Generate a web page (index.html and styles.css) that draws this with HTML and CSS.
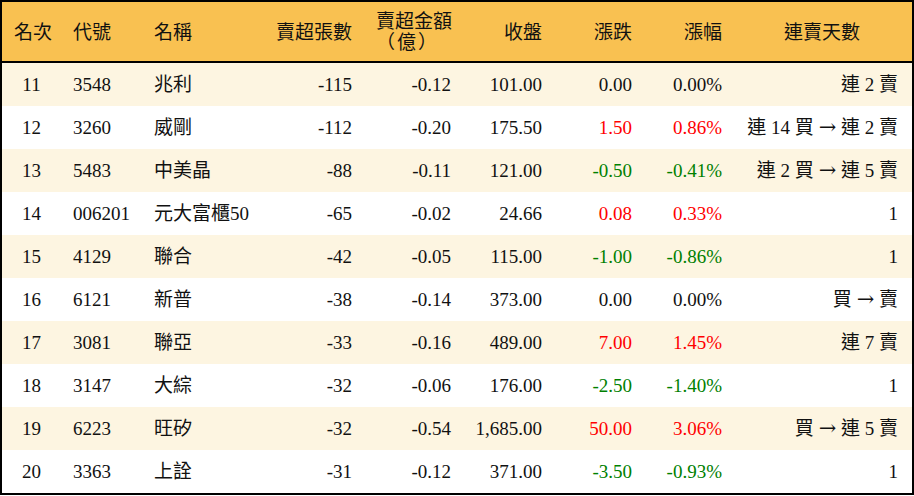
FILE: index.html
```html
<!DOCTYPE html>
<html lang="zh-Hant">
<head>
<meta charset="utf-8">
<title>賣超排行</title>
<link rel="stylesheet" href="styles.css">
</head>
<body>
<div class="board">
  <div class="row head">
    <div class="c center">名次</div>
    <div class="c">代號</div>
    <div class="c">名稱</div>
    <div class="c right">賣超張數</div>
    <div class="c right two">賣超金額<br><span class="unit">（億）</span></div>
    <div class="c right">收盤</div>
    <div class="c right">漲跌</div>
    <div class="c right">漲幅</div>
    <div class="c center">連賣天數</div>
  </div>

  <div class="row alt">
    <div class="c center">11</div><div class="c">3548</div><div class="c">兆利</div>
    <div class="c right">-115</div><div class="c right">-0.12</div><div class="c right">101.00</div>
    <div class="c right">0.00</div><div class="c right">0.00%</div><div class="c right">連 2 賣</div>
  </div>
  <div class="row">
    <div class="c center">12</div><div class="c">3260</div><div class="c">威剛</div>
    <div class="c right">-112</div><div class="c right">-0.20</div><div class="c right">175.50</div>
    <div class="c right up">1.50</div><div class="c right up">0.86%</div><div class="c right">連 14 買 <span class="arr">→</span> 連 2 賣</div>
  </div>
  <div class="row alt">
    <div class="c center">13</div><div class="c">5483</div><div class="c">中美晶</div>
    <div class="c right">-88</div><div class="c right">-0.11</div><div class="c right">121.00</div>
    <div class="c right down">-0.50</div><div class="c right down">-0.41%</div><div class="c right">連 2 買 <span class="arr">→</span> 連 5 賣</div>
  </div>
  <div class="row">
    <div class="c center">14</div><div class="c">006201</div><div class="c">元大富櫃50</div>
    <div class="c right">-65</div><div class="c right">-0.02</div><div class="c right">24.66</div>
    <div class="c right up">0.08</div><div class="c right up">0.33%</div><div class="c right">1</div>
  </div>
  <div class="row alt">
    <div class="c center">15</div><div class="c">4129</div><div class="c">聯合</div>
    <div class="c right">-42</div><div class="c right">-0.05</div><div class="c right">115.00</div>
    <div class="c right down">-1.00</div><div class="c right down">-0.86%</div><div class="c right">1</div>
  </div>
  <div class="row">
    <div class="c center">16</div><div class="c">6121</div><div class="c">新普</div>
    <div class="c right">-38</div><div class="c right">-0.14</div><div class="c right">373.00</div>
    <div class="c right">0.00</div><div class="c right">0.00%</div><div class="c right">買 <span class="arr">→</span> 賣</div>
  </div>
  <div class="row alt">
    <div class="c center">17</div><div class="c">3081</div><div class="c">聯亞</div>
    <div class="c right">-33</div><div class="c right">-0.16</div><div class="c right">489.00</div>
    <div class="c right up">7.00</div><div class="c right up">1.45%</div><div class="c right">連 7 賣</div>
  </div>
  <div class="row">
    <div class="c center">18</div><div class="c">3147</div><div class="c">大綜</div>
    <div class="c right">-32</div><div class="c right">-0.06</div><div class="c right">176.00</div>
    <div class="c right down">-2.50</div><div class="c right down">-1.40%</div><div class="c right">1</div>
  </div>
  <div class="row alt">
    <div class="c center">19</div><div class="c">6223</div><div class="c">旺矽</div>
    <div class="c right">-32</div><div class="c right">-0.54</div><div class="c right">1,685.00</div>
    <div class="c right up">50.00</div><div class="c right up">3.06%</div><div class="c right">買 <span class="arr">→</span> 連 5 賣</div>
  </div>
  <div class="row">
    <div class="c center">20</div><div class="c">3363</div><div class="c">上詮</div>
    <div class="c right">-31</div><div class="c right">-0.12</div><div class="c right">371.00</div>
    <div class="c right down">-3.50</div><div class="c right down">-0.93%</div><div class="c right">1</div>
  </div>
</div>
</body>
</html>
```

FILE: styles.css
```css
html, body {
  margin: 0;
  padding: 0;
  background: #ffffff;
}

body {
  font-family: "Liberation Serif", "Noto Sans CJK TC", serif;
  font-size: 19px;
  color: #111111;
}

.board {
  width: 914px;
  box-sizing: border-box;
  border: 2px solid #000000;
  background: #ffffff;
}

.row {
  display: grid;
  grid-template-columns: 59px 81px 120px 102px 99px 91px 90px 90px 178px;
  height: 43px;
  align-items: center;
}

.row.head {
  height: 59px;
  background: #f9c151;
  border-bottom: 2px solid #000000;
}

.row.alt {
  background: #fdf5e1;
}

.c {
  padding: 0 12px;
  white-space: nowrap;
  line-height: 22px;
  padding-top: 1px;
}

.c:last-child {
  padding-right: 14px;
}

.head .c {
  line-height: 20px;
  padding-top: 2px;
}

.unit {
  display: inline-block;
  letter-spacing: 2px;
  margin-right: 12px;
  margin-top: 1px;
}

.arr {
  font-family: "DejaVu Serif", serif;
  font-size: 21px;
  line-height: 1;
}

.center { text-align: center; }
.right { text-align: right; }

.up { color: #ff0000; }
.down { color: #008000; }
```
